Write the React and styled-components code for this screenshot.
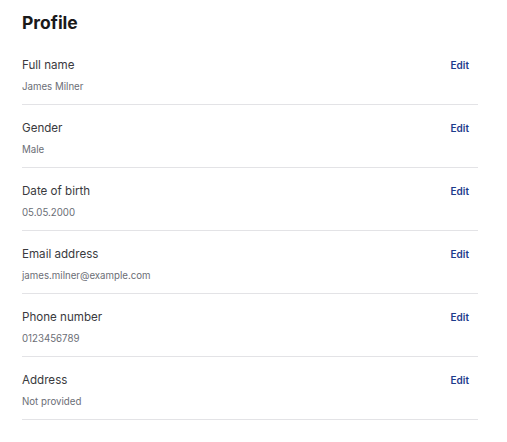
import React from "react";
import styled, { createGlobalStyle } from "styled-components";

const GlobalStyle = createGlobalStyle`
  body {
    margin: 0;
    background: #ffffff;
    font-family: Inter, "Noto Sans", Arial, sans-serif;
  }
`;

const Page = styled.div`
  width: 456px;
  padding: 9px 0 0 22px;
`;

const Title = styled.h1`
  margin: 0 0 5px 0;
  font-size: 17.5px;
  line-height: 28px;
  font-weight: 700;
  color: #1a1a1a;
`;

const Row = styled.div`
  display: flex;
  justify-content: space-between;
  align-items: flex-start;
  padding: 14px 0 9px;
  border-bottom: 1px solid #e3e3e6;
`;

const Info = styled.div`
  display: flex;
  flex-direction: column;
  gap: 5px;
`;

const Label = styled.span`
  font-size: 11.6px;
  line-height: 18px;
  color: #3a3a3e;
`;

const Value = styled.span`
  font-size: 9.7px;
  line-height: 16px;
  color: #6b6e76;
`;

const EditButton = styled.button`
  border: none;
  background: none;
  padding: 0;
  margin-right: 9px;
  font-family: inherit;
  font-size: 10px;
  line-height: 18px;
  font-weight: 600;
  color: #1d3c8c;
  cursor: pointer;
`;

const fields = [
  { label: "Full name", value: "James Milner" },
  { label: "Gender", value: "Male" },
  { label: "Date of birth", value: "05.05.2000" },
  { label: "Email address", value: "james.milner@example.com" },
  { label: "Phone number", value: "0123456789" },
  { label: "Address", value: "Not provided" },
];

const App = () => {
  return (
    <>
      <GlobalStyle />
      <Page>
        <Title>Profile</Title>
        {fields.map((f) => (
          <Row key={f.label}>
            <Info>
              <Label>{f.label}</Label>
              <Value>{f.value}</Value>
            </Info>
            <EditButton>Edit</EditButton>
          </Row>
        ))}
      </Page>
    </>
  );
};

export default App;
